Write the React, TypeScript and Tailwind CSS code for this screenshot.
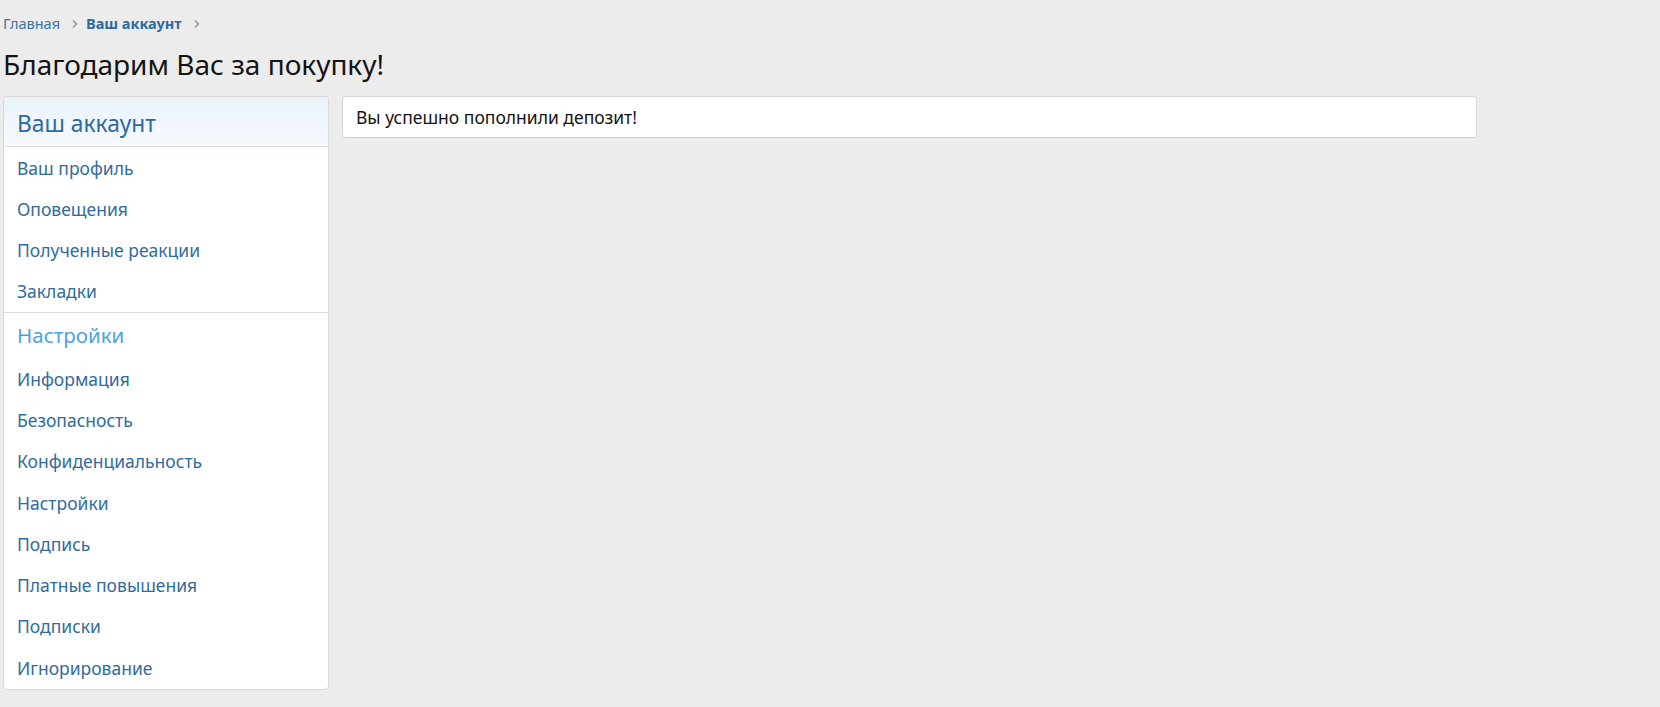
import React from 'react';

const accountLinks = ['Ваш профиль', 'Оповещения', 'Полученные реакции', 'Закладки'];
const settingsLinks = [
  'Информация',
  'Безопасность',
  'Конфиденциальность',
  'Настройки',
  'Подпись',
  'Платные повышения',
  'Подписки',
  'Игнорирование',
];

function Chevron() {
  return (
    <svg className="w-[10px] h-[10px] ml-[10px] mr-[6px] text-[#8c8c8c]" viewBox="0 0 10 10" fill="none">
      <path d="M3 1.5 6.5 5 3 8.5" stroke="currentColor" strokeWidth="1.3" />
    </svg>
  );
}

function NavLink({ label }: { label: string }) {
  return (
    <a href="#" className="flex items-center h-[41.3px] px-[13px] text-[17.5px] text-[#2f6b9f]">
      {label}
    </a>
  );
}

export default function App() {
  return (
    <div className="min-h-screen bg-[#ececec] text-[#141414] font-['Noto_Sans',sans-serif] px-[3px]">
      <nav className="flex items-center pt-[13px] h-[34px] text-[14.5px]">
        <a href="#" className="text-[#3b73a6]">Главная</a>
        <Chevron />
        <a href="#" className="text-[#2d6aa0] font-bold">Ваш аккаунт</a>
        <Chevron />
      </nav>

      <h1 className="text-[28px] leading-[36px] mt-[12px] mb-[14px]">Благодарим Вас за покупку!</h1>

      <div className="flex items-start gap-[13px]">
        <aside className="w-[326px] bg-white border border-[#d8d8d8] rounded-[4px] overflow-hidden">
          <div className="h-[50px] flex items-center pt-[5px] px-[13px] text-[22.8px] text-[#2d6aa0] bg-gradient-to-b from-[#eaf3fb] to-[#f6fafe] border-b border-[#dcdcdc]">
            Ваш аккаунт
          </div>
          <div>
            {accountLinks.map((l) => (
              <NavLink key={l} label={l} />
            ))}
          </div>
          <div className="border-t border-[#dcdcdc]">
            <div className="h-[45px] flex items-center px-[13px] text-[20.5px] text-[#4ba3e3]">Настройки</div>
            {settingsLinks.map((l) => (
              <NavLink key={l} label={l} />
            ))}
          </div>
        </aside>

        <div className="w-[1135px] h-[42px] flex items-center px-[13px] bg-white border border-[#d8d8d8] border-b-[#cfcfcf] rounded-[4px] text-[17.5px]">
          Вы успешно пополнили депозит!
        </div>
      </div>
    </div>
  );
}
